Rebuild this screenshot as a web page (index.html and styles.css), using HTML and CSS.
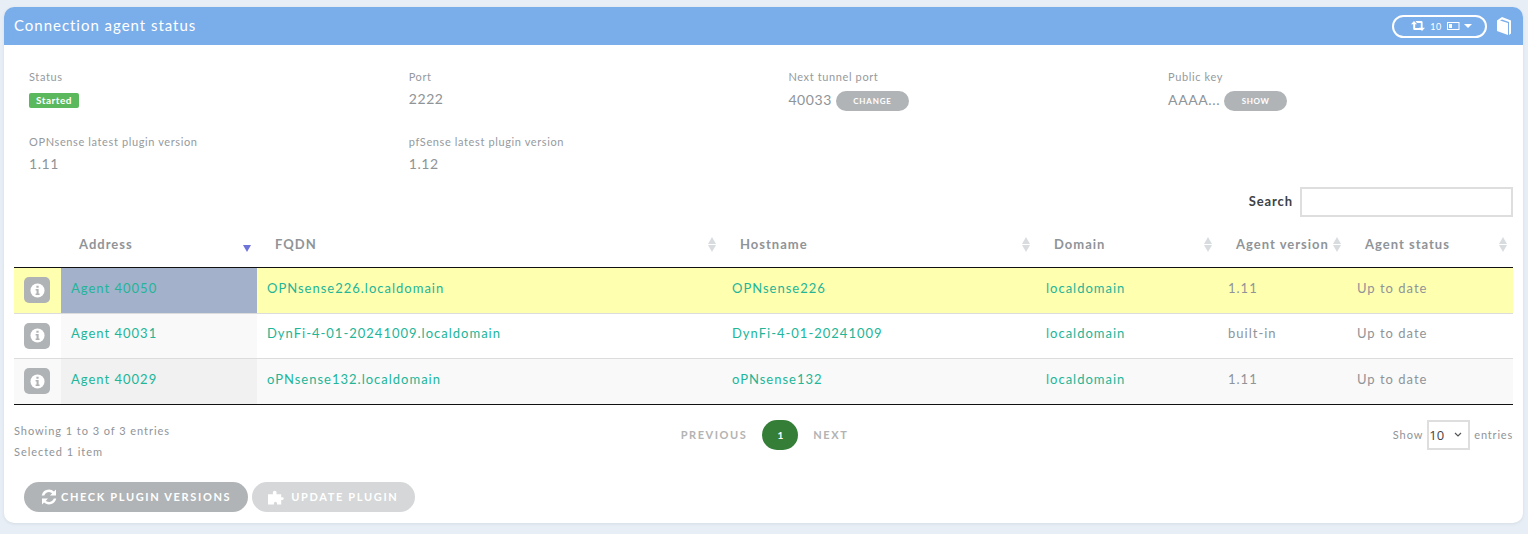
FILE: index.html
```html
<!DOCTYPE html>
<html lang="en">
<head>
<meta charset="utf-8">
<title>Connection agent status</title>
<link rel="stylesheet" href="styles.css">
</head>
<body>
<section class="card">
  <header class="card-head">
    <h1>Connection agent status</h1>
    <div class="head-tools">
      <button class="refresh-pill">
        <svg class="ic-retweet" viewBox="0 0 14 10" width="14" height="10"><path fill="#fff" d="M3 0l3 3.300H4.200V7H9l1.500 2H3.500A1.300 1.300 0 0 1 2.200 7.700V3.300H0zM4.500 0h5.800a1.300 1.300 0 0 1 1.300 1.300v5.400H14L11 10 8 6.700h1.800V2H6z"/></svg>
        <span class="pill-num">10</span>
        <svg class="ic-batt" viewBox="0 0 13 8" width="13" height="8"><rect x=".5" y=".5" width="11.500" height="7" fill="none" stroke="#fff"/><rect x="2" y="2" width="3" height="4" fill="#fff"/></svg>
        <span class="caret"></span>
      </button>
      <svg class="ic-book" viewBox="0 0 14 18" width="14" height="18"><path fill="#fff" d="M0 3.500 5 0l9 3.500v13L12 18V5L5 2.500 3 3.500l8 2.500v12L0 14z"/></svg>
    </div>
  </header>
  <div class="card-body">
    <div class="facts">
      <div class="fact"><div class="fact-label">Status</div><div class="fact-value"><span class="badge">Started</span></div></div>
      <div class="fact"><div class="fact-label">Port</div><div class="fact-value">2222</div></div>
      <div class="fact"><div class="fact-label">Next tunnel port</div><div class="fact-value">40033 <button class="mini-btn mini-change">CHANGE</button></div></div>
      <div class="fact"><div class="fact-label">Public key</div><div class="fact-value">AAAA... <button class="mini-btn mini-show">SHOW</button></div></div>
      <div class="fact"><div class="fact-label">OPNsense latest plugin version</div><div class="fact-value">1.11</div></div>
      <div class="fact"><div class="fact-label">pfSense latest plugin version</div><div class="fact-value">1.12</div></div>
    </div>
    <div class="search-row"><label for="q">Search</label><input id="q" type="search"></div>
    <table class="agents">
      <colgroup><col class="c0"><col class="c1"><col class="c2"><col class="c3"><col class="c4"><col class="c5"><col class="c6"></colgroup>
      <thead>
        <tr>
          <th></th>
          <th>Address<span class="sort-desc"></span></th>
          <th>FQDN<span class="sort"></span></th>
          <th>Hostname<span class="sort"></span></th>
          <th>Domain<span class="sort"></span></th>
          <th>Agent version<span class="sort"></span></th>
          <th>Agent status<span class="sort"></span></th>
        </tr>
      </thead>
      <tbody>
        <tr class="row-selected">
          <td class="td-info"><span class="info-btn"><svg viewBox="0 0 16 16" width="15" height="15"><circle cx="8" cy="8" r="7.500" fill="#fff"/><path fill="#b0b3b5" d="M6.800 2.800h2.400v2.200H6.800zM6 6.500h3.200v4.700h1v1.500H6v-1.500h1V8H6z"/></svg></span></td>
          <td class="td-addr"><a>Agent 40050</a></td>
          <td><a>OPNsense226.localdomain</a></td>
          <td><a>OPNsense226</a></td>
          <td><a>localdomain</a></td>
          <td>1.11</td>
          <td>Up to date</td>
        </tr>
        <tr class="row-even">
          <td class="td-info"><span class="info-btn"><svg viewBox="0 0 16 16" width="15" height="15"><circle cx="8" cy="8" r="7.500" fill="#fff"/><path fill="#b0b3b5" d="M6.800 2.800h2.400v2.200H6.800zM6 6.500h3.200v4.700h1v1.500H6v-1.500h1V8H6z"/></svg></span></td>
          <td class="td-addr"><a>Agent 40031</a></td>
          <td><a>DynFi-4-01-20241009.localdomain</a></td>
          <td><a>DynFi-4-01-20241009</a></td>
          <td><a>localdomain</a></td>
          <td>built-in</td>
          <td>Up to date</td>
        </tr>
        <tr class="row-odd">
          <td class="td-info"><span class="info-btn"><svg viewBox="0 0 16 16" width="15" height="15"><circle cx="8" cy="8" r="7.500" fill="#fff"/><path fill="#b0b3b5" d="M6.800 2.800h2.400v2.200H6.800zM6 6.500h3.200v4.700h1v1.500H6v-1.500h1V8H6z"/></svg></span></td>
          <td class="td-addr"><a>Agent 40029</a></td>
          <td><a>oPNsense132.localdomain</a></td>
          <td><a>oPNsense132</a></td>
          <td><a>localdomain</a></td>
          <td>1.11</td>
          <td>Up to date</td>
        </tr>
      </tbody>
    </table>
    <div class="table-foot">
      <div class="foot-info"><div>Showing 1 to 3 of 3 entries</div><div>Selected 1 item</div></div>
      <nav class="pager"><span class="pg-link">PREVIOUS</span><span class="pg-cur">1</span><span class="pg-link">NEXT</span></nav>
      <div class="foot-len">Show <select><option>10</option></select> <span class="len-tail">entries</span></div>
    </div>
    <div class="actions">
      <button class="act-btn">
        <svg viewBox="0 0 16 16" width="16" height="16"><path fill="#fff" d="M8 .5a7.500 7.500 0 0 1 5 1.900L15 .5v6H9l2.200-2.200A4.800 4.800 0 0 0 3.300 6.500H.7A7.500 7.500 0 0 1 8 .5zM1 9.500h6l-2.200 2.200a4.800 4.800 0 0 0 7.900-2.200h2.600A7.500 7.500 0 0 1 3 13.600L1 15.500z"/></svg>
        <span class="act-text">CHECK PLUGIN VERSIONS</span>
      </button>
      <button class="act-btn act-disabled">
        <svg class="ic-puzzle" viewBox="0 0 18 16" width="17" height="16"><path fill="#fff" d="M0 5h5.200V4A2 2 0 1 1 9 4v1h5v3.200h1.200a1.500 1.500 0 0 1 0 3H14V16H9.500v-1.300a1.600 1.600 0 0 0-3.200 0V16H0z"/></svg>
        <span class="act-text">UPDATE PLUGIN</span>
      </button>
    </div>
  </div>
</section>
</body>
</html>
```

FILE: styles.css
```css
* { box-sizing: border-box; }
html, body { margin: 0; height: 100%; }
body {
  background: #e8eef5;
  font-family: Lato, "Liberation Sans", sans-serif;
  color: #8f9498;
  padding: 7px 5px 0 4px;
  overflow: hidden;
}
.card {
  background: #fff;
  border-radius: 10px;
  height: 516px;
  box-shadow: 0 1px 3px rgba(120, 140, 160, .18);
  overflow: hidden;
}
.card-head {
  height: 38px;
  background: #7aaeea;
  display: flex;
  align-items: center;
  justify-content: space-between;
  padding: 0 12px 0 10px;
}
.card-head h1 {
  margin: 0 0 2px;
  font-size: 15px;
  font-weight: 400;
  letter-spacing: .97px;
  color: #fff;
}
.head-tools { display: flex; align-items: center; gap: 10px; }
.refresh-pill {
  width: 95px;
  height: 23px;
  border: 2px solid #fff;
  border-radius: 12px;
  background: transparent;
  color: #fff;
  display: flex;
  align-items: center;
  justify-content: center;
  gap: 5px;
  padding: 0 0 0 4px;
  font: 400 9px Lato, sans-serif;
}
.pill-num { letter-spacing: .5px; }
.caret {
  width: 0; height: 0;
  border-left: 4px solid transparent;
  border-right: 4px solid transparent;
  border-top: 4px solid #fff;
  margin-left: -1px;
}
.card-body { padding: 0 10px; }
.facts {
  display: grid;
  grid-template-columns: 379.7px 379.7px 379.7px 344px;
  padding: 25px 0 0 15px;
  grid-auto-rows: 65px;
}
.fact-label { font-size: 11px; line-height: 13px; letter-spacing: .62px; color: #959a9e; }
.fact-value {
  margin-top: 6px;
  font-size: 14px;
  line-height: 20px;
  letter-spacing: .6px;
  color: #8f9498;
  display: flex;
  align-items: center;
  gap: 4px;
}
.badge {
  display: block;
  background: #5cb85c;
  color: #fff;
  font-size: 10px;
  font-weight: 700;
  line-height: 15px;
  height: 15px;
  width: 50px;
  text-align: center;
  border-radius: 2px;
  letter-spacing: .5px;
  align-self: flex-start;
  margin-top: 4px;
}
.mini-btn {
  height: 20px;
  border: 0;
  border-radius: 10px;
  background: #b1b4b6;
  color: #fff;
  font: 700 8px Lato, sans-serif;
  padding: 0;
  margin-top: 2px;
}
.mini-change { width: 73px; letter-spacing: .8px; }
.mini-show { width: 63px; letter-spacing: .6px; }
.search-row {
  display: flex;
  justify-content: flex-end;
  align-items: center;
  gap: 7px;
  margin-top: -13px;
  height: 30px;
}
.search-row label { font-size: 13px; font-weight: 700; color: #3d4246; letter-spacing: .9px; margin-bottom: 2px; }
.search-row input {
  width: 213px;
  height: 30px;
  border: 2px solid #dedede;
  background: #fff;
  border-radius: 0;
  outline: 0;
}
.agents {
  width: 1499px;
  table-layout: fixed;
  border-collapse: collapse;
  margin-top: 8px;
  font-size: 13px;
  letter-spacing: 1px;
}
.c0 { width: 47px; } .c1 { width: 196px; } .c2 { width: 465px; } .c3 { width: 314px; }
.c4 { width: 182px; } .c5 { width: 129px; } .c6 { width: 166px; }
.agents thead th {
  height: 42px;
  border-bottom: 1px solid #111;
  text-align: left;
  font-weight: 700;
  letter-spacing: 1px;
  color: #8f9498;
  padding: 0 18px 3px;
  position: relative;
  white-space: nowrap;
}
.sort, .sort-desc { position: absolute; right: 5px; top: 12px; width: 9px; height: 15px; }
.sort::before, .sort::after {
  content: "";
  position: absolute;
  left: 0;
  border-left: 4.500px solid transparent;
  border-right: 4.500px solid transparent;
}
.sort::before { top: 0; border-bottom: 7px solid #d9dcdf; }
.sort::after { bottom: 0; border-top: 7px solid #d9dcdf; }
.sort-desc::after {
  content: "";
  position: absolute;
  left: 0;
  bottom: 0;
  border-left: 4.500px solid transparent;
  border-right: 4.500px solid transparent;
  border-top: 7px solid #6f74d8;
}
.agents td {
  padding: 0 10px 4px;
  height: 46px;
  border-bottom: 1px solid #dcdcdc;
  white-space: nowrap;
  color: #8f9498;
}
.agents .row-even td { height: 45px; padding-bottom: 5px; }
.agents tbody tr:last-child td { border-bottom: 1px solid #111; }
.agents a { color: #22b598; }
.agents .td-info, .agents .row-even .td-info { padding: 0 0 0 10px; }
.info-btn {
  width: 26px;
  height: 26px;
  border-radius: 5px;
  background: #b0b3b5;
  display: flex;
  align-items: center;
  justify-content: center;
}
.row-selected td { background: #ffffb0; }
.row-selected .td-addr { background: #a3b1cb; }
.row-even td { background: #fff; }
.row-even .td-addr { background: #f9f9f9; }
.row-odd td { background: #f9f9f9; }
.row-odd .td-addr { background: #f1f1f1; }
.table-foot {
  display: grid;
  grid-template-columns: 1fr auto 1fr;
  align-items: start;
  padding-top: 15px;
  height: 68px;
}
.foot-info { font-size: 11px; line-height: 21px; letter-spacing: .95px; color: #8f9498; }
.pager { display: flex; align-items: center; gap: 15px; padding-left: 2px; }
.pg-link { font-size: 11px; font-weight: 700; letter-spacing: 1.55px; color: #b3b3b3; }
.pg-cur {
  width: 36px;
  height: 30px;
  border-radius: 15px;
  background: #357e38;
  color: #fff;
  font-size: 10px;
  font-weight: 700;
  display: flex;
  align-items: center;
  justify-content: center;
}
.foot-len {
  justify-self: end;
  display: flex;
  align-items: center;
  gap: 4px;
  font-size: 11px;
  letter-spacing: .95px;
  color: #8f9498;
}
.len-tail { letter-spacing: .8px; }
.foot-len select {
  appearance: none;
  width: 43px;
  height: 30px;
  border: 2px solid #dedede;
  border-radius: 0;
  background: #fff url("data:image/svg+xml,%3Csvg xmlns='http://www.w3.org/2000/svg' width='8' height='5'%3E%3Cpath d='M1 1l3 3 3-3' fill='none' stroke='%23555' stroke-width='1.200'/%3E%3C/svg%3E") no-repeat right 6px center;
  font: 13px "Open Sans", sans-serif;
  color: #444;
  padding: 0;
}
.actions { display: flex; gap: 4px; padding: 9px 0 0 10px; }
.act-btn {
  height: 30px;
  border: 0;
  border-radius: 15px;
  background: #b1b4b6;
  color: #fff;
  font: 700 11px Lato, sans-serif;
  letter-spacing: 1.65px;
  display: flex;
  align-items: center;
  gap: 4px;
  padding: 0 17px;
}
.act-text { margin-bottom: 1px; }
.act-disabled { background: #d5d7d8; padding-left: 16px; }
.ic-puzzle { margin-right: 2px; }
```
